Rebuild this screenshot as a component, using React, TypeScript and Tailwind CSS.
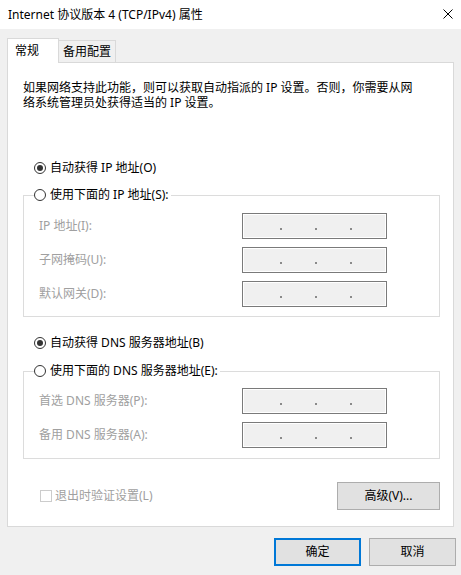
import React from "react"

function Radio({ checked, label }: { checked?: boolean; label: string }) {
  return (
    <span className="flex items-center h-[16px] text-black">
      <span className="w-[12px] h-[12px] rounded-full border border-[#333333] bg-white flex items-center justify-center">
        {checked && <span className="w-[6px] h-[6px] rounded-full bg-[#333333]" />}
      </span>
      <span className="ml-[4px] leading-[16px]">{label}</span>
    </span>
  )
}

function IpField() {
  return (
    <div className="w-[145px] h-[26px] border border-[#7a7a7a] bg-[#f0f0f0] shadow-[inset_0_0_0_1px_#ffffff] flex items-center pl-[37px] gap-[33px]">
      <span className="w-[2px] h-[2px] mt-[5px] bg-[#8a8a8a]" />
      <span className="w-[2px] h-[2px] mt-[5px] bg-[#8a8a8a]" />
      <span className="w-[2px] h-[2px] mt-[5px] bg-[#8a8a8a]" />
    </div>
  )
}

function FieldRow({ label }: { label: string }) {
  return (
    <div className="flex items-center h-[26px]">
      <span className="w-[203px] text-[#a0a0a0]">{label}</span>
      <IpField />
    </div>
  )
}

function Button({ children, primary }: { children: React.ReactNode; primary?: boolean }) {
  return (
    <button
      className={
        primary
          ? "w-[87px] h-[28px] bg-[#e1e1e1] border-2 border-[#0078d7] text-black"
          : "w-[87px] h-[28px] bg-[#e1e1e1] border border-[#adadad] text-black"
      }
    >
      {children}
    </button>
  )
}

export default function App() {
  return (
    <div className="w-[461px] h-[575px] bg-[#f0f0f0] flex flex-col text-[12px] leading-[16px] text-black font-['Noto_Sans','Noto_Sans_CJK_SC',sans-serif] overflow-hidden">
      {/* Title bar */}
      <div className="h-[29px] bg-white flex items-center justify-between pl-[8px] pr-[8px] shrink-0">
        <span>Internet 协议版本 4 (TCP/IPv4) 属性</span>
        <svg width="10" height="10" viewBox="0 0 10 10" className="mt-[-1px]">
          <path d="M0.5 0.5 L9.5 9.5 M9.5 0.5 L0.5 9.5" stroke="#000" strokeWidth="1" />
        </svg>
      </div>

      {/* Tabs */}
      <div className="flex items-end ml-[7px] mt-[9px] -mb-px relative z-10">
        <div className="w-[52px] h-[25px] bg-white border border-b-0 border-[#d9d9d9] flex items-center pl-[7px]">常规</div>
        <div className="w-[57px] h-[23px] bg-[#f0f0f0] border border-l-0 border-[#d9d9d9] flex items-center justify-center">备用配置</div>
      </div>

      {/* Panel */}
      <div className="ml-[7px] w-[447px] bg-white border border-[#d9d9d9] px-[15px] pt-[17px] pb-[16px]">
        <p className="leading-[15px]">
          如果网络支持此功能，则可以获取自动指派的 IP 设置。否则，你需要从网
          <br />
          络系统管理员处获得适当的 IP 设置。
        </p>

        <div className="mt-[50px] ml-[11px]">
          <Radio checked label="自动获得 IP 地址(O)" />
        </div>

        <fieldset className="mt-[11px] w-[417px] border border-[#dcdcdc] pl-[15px] pt-[10px] pb-[9px]">
          <legend className="ml-[-5px] pr-[2px]">
            <Radio label="使用下面的 IP 地址(S):" />
          </legend>
          <div className="flex flex-col gap-[8px]">
            <FieldRow label="IP 地址(I):" />
            <FieldRow label="子网掩码(U):" />
            <FieldRow label="默认网关(D):" />
          </div>
        </fieldset>

        <div className="mt-[18px] ml-[11px]">
          <Radio checked label="自动获得 DNS 服务器地址(B)" />
        </div>

        <fieldset className="mt-[12px] w-[417px] border border-[#dcdcdc] pl-[15px] pt-[9px] pb-[10px]">
          <legend className="ml-[-5px] pr-[2px]">
            <Radio label="使用下面的 DNS 服务器地址(E):" />
          </legend>
          <div className="flex flex-col gap-[8px]">
            <FieldRow label="首选 DNS 服务器(P):" />
            <FieldRow label="备用 DNS 服务器(A):" />
          </div>
        </fieldset>

        <div className="mt-[23px] w-[417px] h-[28px] flex items-center justify-between">
          <span className="flex items-center ml-[17px] text-[#a0a0a0]">
            <span className="w-[12px] h-[12px] border border-[#cccccc] bg-white" />
            <span className="ml-[3px]">退出时验证设置(L)</span>
          </span>
          <button className="w-[103px] h-[28px] bg-[#e1e1e1] border border-[#adadad] text-black">高级(V)...</button>
        </div>
      </div>

      {/* Dialog buttons */}
      <div className="mt-[11px] flex justify-end gap-[8px] pr-[5px]">
        <Button primary>确定</Button>
        <Button>取消</Button>
      </div>
    </div>
  )
}
